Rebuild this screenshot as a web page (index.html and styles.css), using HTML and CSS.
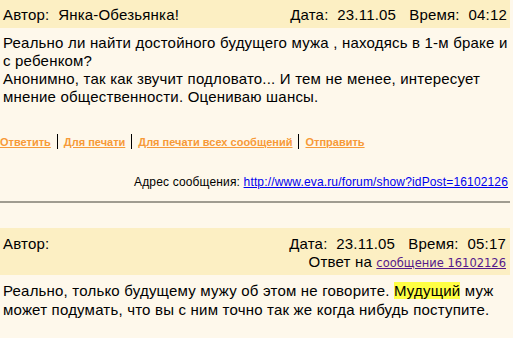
FILE: index.html
```html
<!DOCTYPE html>
<html lang="ru">
<head>
    <meta charset="UTF-8">
    <title>Форум Eva.ru</title>
    <link rel="stylesheet" href="styles.css">
</head>
<body>
    <div class="forum">
        <div class="post">
            <div class="post-head">
                <span>Автор:&nbsp; Янка-Обезьянка!</span>
                <span class="meta">Дата:&nbsp; 23.11.05 &nbsp; Время:&nbsp; 04:12</span>
            </div>
            <div class="post-text">
                Реально ли найти достойного будущего мужа , находясь в 1-м браке и с ребенком?<br>
                Анонимно, так как звучит подловато... И тем не менее, интересует мнение общественности. Оцениваю шансы.
            </div>
            <div class="post-links">
                <a href="#">Ответить</a>
                <span class="sep"></span>
                <a href="#">Для печати</a>
                <span class="sep"></span>
                <a href="#">Для печати всех сообщений</a>
                <span class="sep"></span>
                <a href="#">Отправить</a>
            </div>
            <div class="post-url">
                Адрес сообщения: <a href="#">http://www.eva.ru/forum/show?idPost=16102126</a>
            </div>
        </div>
        <hr class="divider">
        <div class="post">
            <div class="post-head reply-head">
                <div class="head-row">
                    <span>Автор:</span>
                    <span class="meta">Дата:&nbsp; 23.11.05 &nbsp; Время:&nbsp; 05:17</span>
                </div>
                <div class="reply-to">Ответ на <a href="#" class="visited">сообщение 16102126</a></div>
            </div>
            <div class="post-text reply-text">
                Реально, только будущему мужу об этом не говорите. <span class="mark">Мудущий</span> муж может подумать, что вы с ним точно так же когда нибудь поступите.
            </div>
        </div>
    </div>
</body>
</html>
```

FILE: styles.css
```css
body {
    margin: 0;
    background-color: #fef8eb;
    font-family: "Liberation Sans", Arial, sans-serif;
    font-size: 15px;
    letter-spacing: 0.2px;
    color: #000;
}
.forum {
    width: 510px;
}
.post-head {
    background-color: #fcefc3;
    height: 28px;
    padding: 0 3px;
    display: flex;
    justify-content: space-between;
    align-items: center;
}
.meta {
    white-space: pre;
}
.post-text {
    padding: 6px 0 0 3px;
    line-height: 18px;
}
.post-links {
    margin-top: 28px;
    display: flex;
    align-items: center;
    gap: 6px;
    font-size: 11px;
    font-weight: bold;
    letter-spacing: 0;
}
.post-links a {
    color: #f79a38;
}
.sep {
    width: 1px;
    height: 15px;
    background: #000;
}
.post-url {
    margin-top: 26px;
    text-align: right;
    font-size: 12px;
    letter-spacing: 0.15px;
    padding-right: 2px;
}
.post-url a {
    color: #0000ee;
}
.divider {
    margin: 12px 0 0 0;
    border: none;
    border-top: 2px solid #a09c90;
}
.divider + .post {
    margin-top: 25px;
}
.reply-head {
    height: auto;
    display: block;
    padding: 5px 4px 1px 3px;
}
.head-row {
    display: flex;
    justify-content: space-between;
    height: 20px;
    align-items: center;
}
.reply-to {
    text-align: right;
    height: 21px;
}
.reply-to a {
    font-family: "DejaVu Sans", Tahoma, sans-serif;
    font-size: 11.5px;
    letter-spacing: 0;
    color: #551a8b;
}
.reply-text {
    line-height: 19px;
}
.mark {
    background-color: #ffff44;
}
```
